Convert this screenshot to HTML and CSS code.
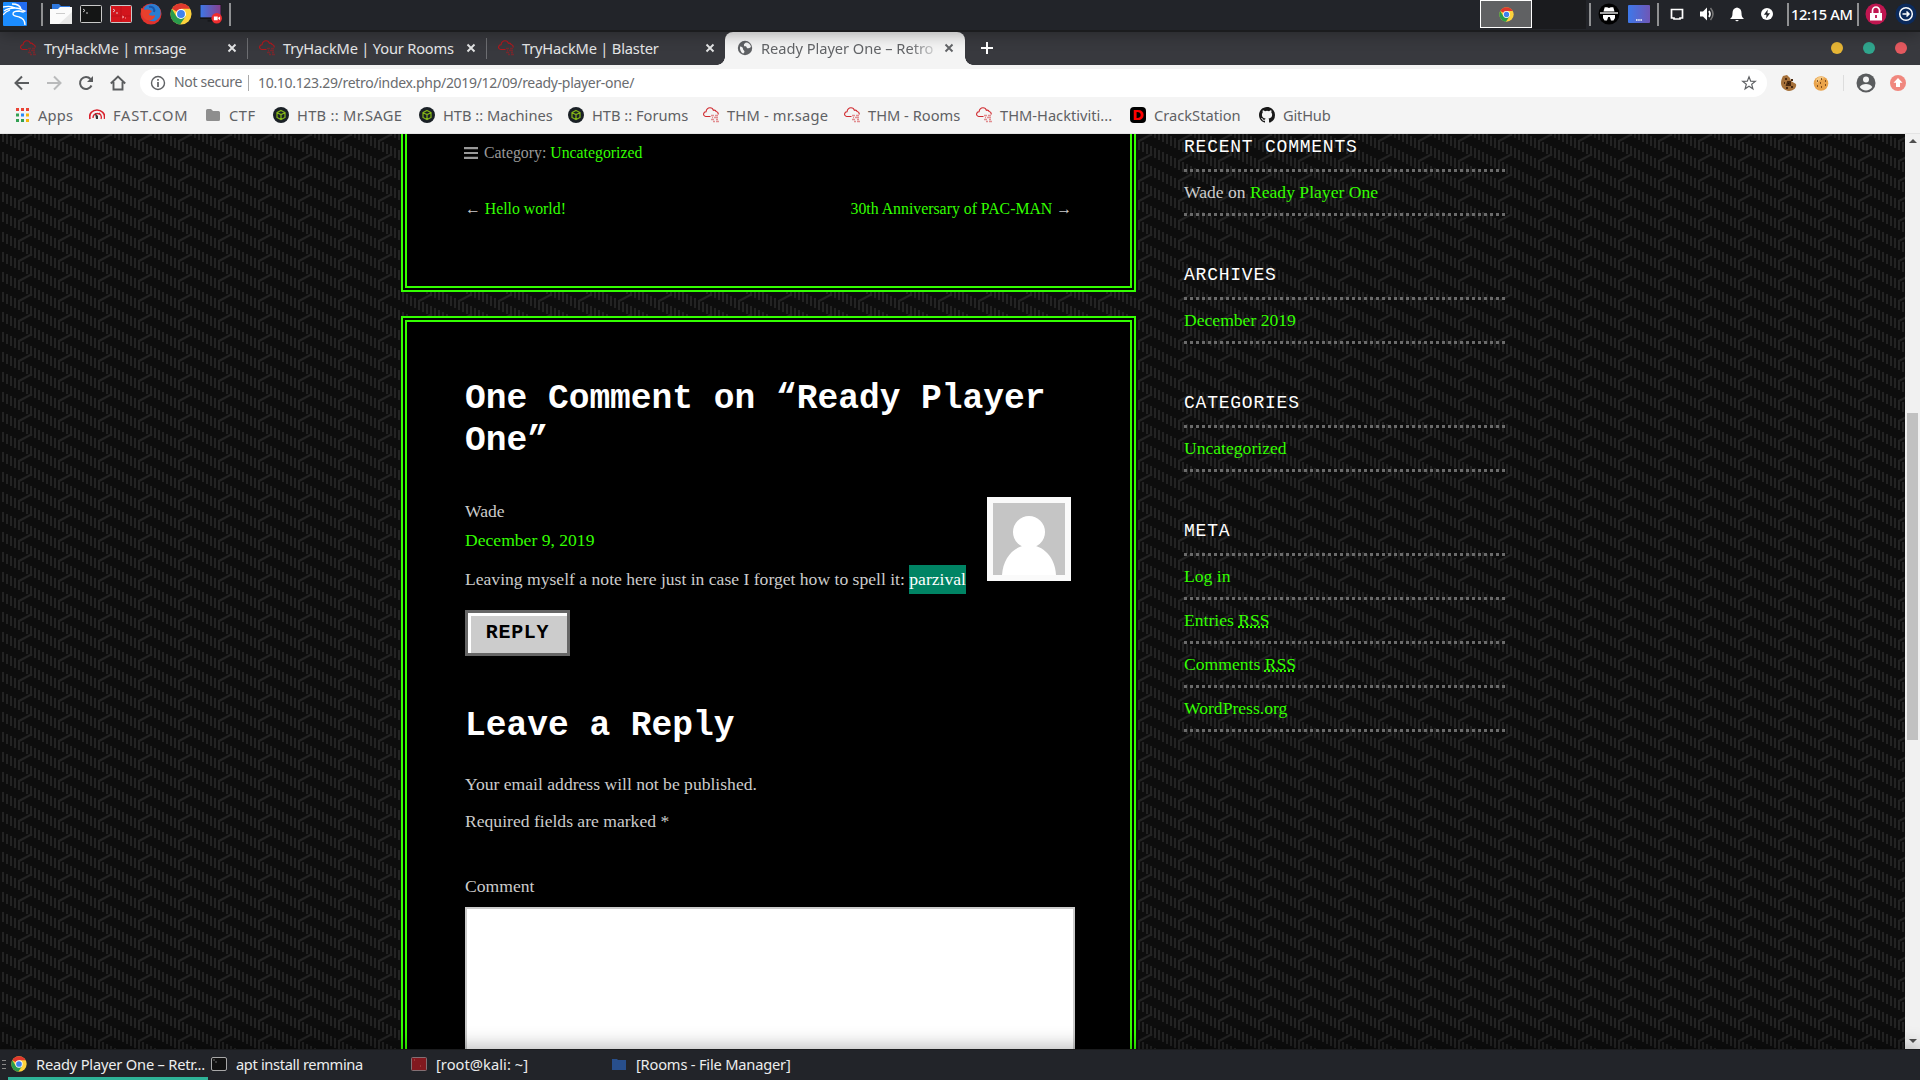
FILE: index.html
```html
<!DOCTYPE html>
<html lang="en">
<head>
<meta charset="utf-8">
<title>Ready Player One – Retro Fanatics</title>
<link rel="stylesheet" href="styles.css">
</head>
<body>
<svg class="defs" aria-hidden="true">
  <symbol id="chrome" viewBox="0 0 24 24">
    <circle cx="12" cy="12" r="11.5" fill="#fdd23c"/>
    <path d="M12 12 2 6.3A11.5 11.5 0 0 1 22 6.3H12z" fill="#e0382d"/>
    <path d="M2 6.3A11.5 11.5 0 0 0 11 23.5L17 14.7 12 12 7 14.7z" fill="#2a9b4c"/>
    <circle cx="12" cy="12" r="5.5" fill="#fff"/><circle cx="12" cy="12" r="4.3" fill="#3f82ee"/>
  </symbol>
  <symbol id="cloud" viewBox="0 0 16 16">
    <path d="M7.500 9.500H2.800C1.200 9.300.4 8 .6 6.800.8 5.600 1.800 4.800 3 4.800 3.400 2.300 4.800.7 7 .7c1.800 0 3 1 3.400 2.600 1.200-.4 2.300.1 2.700 1.200 1.400.2 2.300 1.400 2.100 3" fill="none" stroke="currentColor" stroke-width="1.100"/>
    <path d="M8 8.500h3m1 0h3M9 10.500h1m1 0h4M8 12.500h3m2 0h2M10 14.500h2m1 0h3" stroke="currentColor" stroke-width="1.300" opacity=".5"/>
  </symbol>
  <symbol id="htb" viewBox="0 0 16 16">
    <circle cx="8" cy="8" r="8" fill="#1a2026"/>
    <path d="M8 3.500 12 5.500v5L8 12.500 4 10.500v-5zM4 5.700 8 7.500l4-1.800M8 7.500v5" fill="none" stroke="#86b817" stroke-width="1.200"/>
  </symbol>
  <symbol id="close" viewBox="0 0 10 10"><path d="M1.500 1.500l7 7m0-7l-7 7" stroke="currentColor" stroke-width="1.900"/></symbol>
  <symbol id="term" viewBox="0 0 22 18">
    <rect x=".5" y=".5" width="21" height="17" rx="1" fill="currentColor" stroke="#c9c9c9"/>
    <path d="M3 4l2 1.500L3 7M6 8h2" stroke="#ddd" stroke-width=".9" fill="none"/>
  </symbol>
</svg>

<header class="panel panel-top">
  <svg class="kali" viewBox="0 0 24 24"><rect width="24" height="24" rx="1" fill="#1b8cff"/><path d="M12 0h12v12z" fill="#226cf0"/><path d="M0 5c5-1 9-1 12 1M1 9c4-3 8-3 11-3 3 0 6 1 7 2l3 1-2 1-4-1c-4 0-6 1-6 3s3 2 6 3c4 1 6 3 6 8M9 2c4 0 8 1 9 5M0 13c2-3 4-4 7-5" fill="none" stroke="#fff" stroke-width="1.300"/></svg>
  <i class="sep"></i>
  <div class="launchers">
    <svg viewBox="0 0 22 20"><path d="M2 0h7l2 2h9v6H2z" fill="#2f78de"/><path d="M0 5h8l2-2h12v17H0z" fill="#fbfbfb"/><path d="M22 8v12H9z" fill="#e8e8e8"/><path d="M6 9.500h9" stroke="#ccc"/></svg>
    <svg class="dark-term" viewBox="0 0 22 18"><use href="#term"/></svg>
    <svg class="red-term" viewBox="0 0 22 18"><use href="#term"/><path d="M11 1v16M1 11h20" stroke="#b51119" stroke-width=".7"/><path d="M12 11l2 1-2 1M15 13h1" stroke="#ffb0b0" fill="none" stroke-width=".8"/></svg>
    <svg viewBox="0 0 22 22"><circle cx="11" cy="11" r="10.500" fill="#e2332d"/><path d="M4 5C7 0 17-1 20 6c2 7-1 10-5 12-5 1-9-2-9-6z" fill="#2a7dd2"/><path d="M1 5l4 2c2-1 5 0 7 1-1 2-3 2-3 4 2 1 5 1 6 0 0 4-4 6-8 5-4-1-6-6-6-12z" fill="#e8402c"/><path d="M9 4c4-1 6 2 5 5" stroke="#1b56a8" stroke-width="2" fill="none"/></svg>
    <svg viewBox="0 0 24 24"><use href="#chrome"/></svg>
    <svg viewBox="0 0 23 22"><defs><linearGradient id="screen"><stop stop-color="#3d78e6"/><stop offset="1" stop-color="#8a3f8e"/></linearGradient></defs><rect y="1" width="22" height="15" fill="#111"/><rect x=".500" y="1.500" width="21" height="13" fill="url(#screen)"/><path d="M8 18h8" stroke="#17181b" stroke-width="2"/><circle cx="17.500" cy="15.500" r="5.500" fill="#ee2d2f"/><path d="M14.500 13.500h4v4h-4zM19 15l2-1.500v4L19 16z" fill="#fff"/></svg>
  </div>
  <i class="sep"></i>
  <div class="window-list"><span class="window-button"><svg viewBox="0 0 24 24"><use href="#chrome"/></svg></span><i class="window-rest"></i></div>
  <i class="sep"></i>
  <div class="tray">
    <svg viewBox="0 0 22 22"><circle cx="11" cy="11" r="10.500" fill="#000"/><path d="M5.500 8.500 6.700 4.200h2.500l1.800.7 1.800-.7h2.500l1.200 4.300z" fill="#fff"/><path d="M2 10h18" stroke="#fff" stroke-width="1.300"/><path d="M5 12h12v3l-1.500 2.500h-2.500L11.800 14h-1.600L9 17.500H6.500L5 15z" fill="#fff"/></svg>
    <svg viewBox="0 0 22 22"><defs><linearGradient id="desk"><stop stop-color="#3d78ea"/><stop offset="1" stop-color="#7057b6"/></linearGradient></defs><rect y="2" width="22" height="18" rx="1" fill="url(#desk)"/><path d="M8 17h6" stroke="#fff" stroke-width="1.500" stroke-dasharray="1.500 .7"/></svg>
  </div>
  <i class="sep"></i>
  <div class="status">
    <svg viewBox="0 0 16 16"><path d="M2.500 3.500h11v8.500h-2.500v1H5v-1H2.500z" fill="none" stroke="#fff" stroke-width="1.700"/></svg>
    <svg viewBox="0 0 16 16"><path d="M1 5.500h3L8 1.500v13L4 10.500H1z" fill="#fff"/><path d="M10 5q2 3 0 6" fill="none" stroke="#fff" stroke-width="1.700"/><path d="M11.500 2q5 6 0 12" fill="none" stroke="#777" stroke-width="1.500"/></svg>
    <svg viewBox="0 0 16 16"><path d="M1 13c2-2 2.500-3 2.500-6 0-3 1.500-5 4.500-5.500 3 .5 4.500 2.500 4.500 5.500 0 3 .5 4 2.500 6zM6 14h4l-2 1.500z" fill="#fff"/></svg>
    <svg viewBox="0 0 16 16"><circle cx="8" cy="8" r="6" fill="#fff"/><path d="M8.800 3.500 4.900 8.800h2.600l-.4 3.700 4-5.300H8.400z" fill="#222429"/></svg>
  </div>
  <i class="sep"></i>
  <time class="clock">12:15 AM</time>
  <i class="sep"></i>
  <div class="session">
    <svg viewBox="0 0 22 22"><circle cx="11" cy="11" r="10.500" fill="#bf1650"/><path d="M5 10h12v7.500H5z" fill="#fff"/><path d="M7.500 10V7.500a3.500 3.500 0 0 1 7 0V10" fill="none" stroke="#fff" stroke-width="1.700"/><path d="M11 12v3" stroke="#bf1650" stroke-width="1.800"/></svg>
    <svg viewBox="0 0 22 22"><circle cx="11" cy="11" r="10.500" fill="#0b2a5c"/><circle cx="11" cy="11" r="6.300" fill="none" stroke="#fff" stroke-width="1.500"/><path d="M7.500 11h6M11.500 8.500 14 11l-2.500 2.500" fill="none" stroke="#fff" stroke-width="1.500"/></svg>
  </div>
</header>

<nav class="tabstrip">
  <div class="tab"><svg class="fav"><use href="#cloud"/></svg><span>TryHackMe | mr.sage</span><svg class="x"><use href="#close"/></svg></div>
  <div class="tab"><svg class="fav"><use href="#cloud"/></svg><span>TryHackMe | Your Rooms</span><svg class="x"><use href="#close"/></svg></div>
  <div class="tab"><svg class="fav"><use href="#cloud"/></svg><span>TryHackMe | Blaster</span><svg class="x"><use href="#close"/></svg></div>
  <div class="tab active"><svg class="fav" viewBox="0 0 16 16"><circle cx="8" cy="8" r="7.200" fill="#5f6164"/><path d="M3 6.500c2 0 3 1 3 2.500s1.500 1 1.500 3c-1 1-1 1.500-1.500 1.500C4 12.500 2.500 9.500 3 6.500zM9 2.500c-1 1-2.500 1-2 3s2-.5 2.500 1.500 1.500 1 3 1l1.500-1C13.500 4 11.500 2.500 9 2.500z" fill="#f4f4f4"/></svg><span>Ready Player One – Retro</span><svg class="x"><use href="#close"/></svg></div>
  <svg class="new-tab" viewBox="0 0 12 12"><path d="M6 0v12M0 6h12" stroke="#fff" stroke-width="2"/></svg>
  <div class="lights"><i class="min"></i><i class="max"></i><i class="quit"></i></div>
</nav>

<div class="toolbar">
  <svg class="tool" viewBox="0 0 16 16"><path d="M15 8H2M8 1.500 1.500 8 8 14.500" fill="none" stroke="#5a5c5e" stroke-width="2"/></svg>
  <svg class="tool" viewBox="0 0 16 16"><path d="M1 8h13M8 1.500 14.500 8 8 14.500" fill="none" stroke="#b9babb" stroke-width="2"/></svg>
  <svg class="tool" viewBox="0 0 16 16"><path d="M13.500 10.500A6 6 0 1 1 12.500 4" fill="none" stroke="#5a5c5e" stroke-width="2"/><path d="M15 1v6H9z" fill="#5a5c5e"/></svg>
  <svg class="tool" viewBox="0 0 16 16"><path d="M.800 8.500 8 1.500l7.200 7M3.500 7v7.500h9V7" fill="none" stroke="#5a5c5e" stroke-width="1.900"/></svg>
  <div class="omnibox">
    <svg class="info" viewBox="0 0 16 16"><circle cx="8" cy="8" r="6.500" fill="none" stroke="#5f6164" stroke-width="1.400"/><path d="M8 4v1.800M8 7v5" stroke="#5f6164" stroke-width="1.700"/></svg>
    <span class="secure">Not secure</span><span class="url">10.10.123.29/retro/index.php/2019/12/09/ready-player-one/</span>
    <svg class="star" viewBox="0 0 16 16"><path d="M8 1.800 9.700 6.200l4.600.2-3.600 2.900 1.200 4.500L8 11.300l-3.900 2.500 1.200-4.500-3.600-2.900 4.600-.2z" fill="none" stroke="#5f6164" stroke-width="1.200"/></svg>
  </div>
  <div class="extensions">
    <svg viewBox="0 0 16 16"><path d="M2 1l4-1 3 3 1 3 5 3c1 3-2 7-7 7-5-.5-8-4-8-8C0 5 1 3 2 1z" fill="#a6713a"/><path d="M4 4h2M3 8h1M7 7h2v3H6zM10 12h2M5 13h2M10 5h2" stroke="#4a2a12" stroke-width="2"/></svg>
    <svg viewBox="0 0 16 16"><circle cx="8" cy="8.500" r="7.300" fill="#e9a34b"/><path d="M3 4q4-4 9-1-6 1-8 6z" fill="#f6ca86"/><path d="M4 6h1M8 4h1M12 6h1M7 8h1M4 11h1M8 12h1M12 10h1" stroke="#5f3310" stroke-width="1.300"/></svg>
    <i></i>
    <svg class="avatar-icon" viewBox="0 0 20 20"><circle cx="10" cy="10" r="9.500" fill="#5a5c5e"/><circle cx="10" cy="6.500" r="3" fill="#f4f4f4"/><path d="M3.700 14c2-4 10.600-4 12.600 0-3 4.500-9.600 4.500-12.600 0z" fill="#f4f4f4"/></svg>
    <svg viewBox="0 0 16 16"><circle cx="8" cy="8" r="8" fill="#f0877e"/><path d="M8 3l4.500 4.800H10V12H6V7.800H3.500z" fill="#fff"/></svg>
  </div>
</div>

<div class="bookmarks">
  <span class="bm apps"><svg viewBox="0 0 16 16"><path d="M2 2.500h3M7 2.500h3M12 2.500h3" stroke="#ea4335" stroke-width="3"/><path d="M2 8h3M2 13.500h3M7 13.500h3" stroke="#34a153" stroke-width="3"/><path d="M7 8h3" stroke="#2a8cf4" stroke-width="3"/><path d="M12 8h3M12 13.500h3" stroke="#f5b70b" stroke-width="3"/></svg>Apps</span>
  <span class="bm fast"><svg viewBox="0 0 16 16"><path d="M1 12C-.5 6 4 3 8 3s8.500 3 7.500 9" fill="none" stroke="#d9202c" stroke-width="1.700"/><path d="M4 11c0-4 4-6 8-3M12 12c1-2 0-4-2-6" fill="none" stroke="#d9202c" stroke-width="1.300"/><path d="M6 6l3 3v3H7z" fill="#333"/></svg>FAST.COM</span>
  <span class="bm ctf"><svg viewBox="0 0 16 16"><path d="M1 3.500q0-1.500 1.500-1.500H6l2 2h5.500Q15 4 15 5.500v7q0 1.500-1.500 1.500h-11Q1 14 1 12.500z" fill="#8e8e8e"/></svg>CTF</span>
  <span class="bm b1"><svg><use href="#htb"/></svg>HTB :: Mr.SAGE</span>
  <span class="bm b2"><svg><use href="#htb"/></svg>HTB :: Machines</span>
  <span class="bm b3"><svg><use href="#htb"/></svg>HTB :: Forums</span>
  <span class="bm b4"><svg><use href="#cloud"/></svg>THM - mr.sage</span>
  <span class="bm b5"><svg><use href="#cloud"/></svg>THM - Rooms</span>
  <span class="bm b6"><svg><use href="#cloud"/></svg>THM-Hacktiviti...</span>
  <span class="bm b7"><b class="crack">D</b>CrackStation</span>
  <span class="bm b8"><svg viewBox="0 0 16 16"><path fill="#181818" fill-rule="evenodd" d="M8 0C3.580 0 0 3.580 0 8c0 3.540 2.290 6.530 5.470 7.590.4.070.55-.17.55-.38v-1.490c-2.010.37-2.530-.49-2.690-.94-.09-.23-.48-.94-.82-1.130-.28-.15-.68-.52-.01-.53.63-.01 1.080.58 1.230.82.72 1.210 1.870.87 2.330.66.07-.52.28-.87.51-1.070-1.780-.2-3.640-.89-3.640-3.950 0-.87.31-1.590.82-2.150-.08-.2-.36-1.020.08-2.120 0 0 .67-.21 2.200.82a7.600 7.600 0 0 1 4 0c1.530-1.040 2.200-.82 2.200-.82.44 1.100.16 1.920.08 2.120.51.56.82 1.270.82 2.150 0 3.070-1.870 3.750-3.650 3.950.29.25.54.73.54 1.480v2.200c0 .21.15.46.55.38A8 8 0 0 0 16 8c0-4.420-3.580-8-8-8z"/></svg>GitHub</span>
</div>

<div class="viewport">
  <div class="site">
    <main>
      <article class="card post">
        <p class="category"><svg viewBox="0 0 14 12"><path d="M0 1.200h14M0 6h14M0 10.800h14" stroke="#999" stroke-width="2.200"/></svg>Category: <a>Uncategorized</a></p>
        <nav class="post-nav"><span>← <a>Hello world!</a></span><span><a>30th Anniversary of PAC-MAN</a> →</span></nav>
      </article>
      <section class="card comments">
        <h2>One Comment on “Ready Player One”</h2>
        <div class="comment">
          <div class="comment-text">
            <div>Wade</div>
            <div><a>December 9, 2019</a></div>
            <p>Leaving myself a note here just in case I forget how to spell it: <mark>parzival</mark></p>
          </div>
          <svg class="avatar" viewBox="0 0 72 72"><rect width="72" height="72" fill="#c5c5c5"/><circle cx="36" cy="29" r="16" fill="#fff"/><path d="M9 72C10 54 22 42 36 42s26 12 27 30z" fill="#fff"/></svg>
        </div>
        <a class="reply">REPLY</a>
        <h2 class="leave">Leave a Reply</h2>
        <p class="note">Your email address will not be published.</p>
        <p class="note">Required fields are marked *</p>
        <label>Comment</label>
        <div class="textarea"></div>
      </section>
    </main>
    <aside>
      <h3>Recent Comments</h3>
      <ul><li>Wade on <a>Ready Player One</a></li></ul>
      <h3>Archives</h3>
      <ul><li><a>December 2019</a></li></ul>
      <h3>Categories</h3>
      <ul><li><a>Uncategorized</a></li></ul>
      <h3>Meta</h3>
      <ul><li><a>Log in</a></li><li><a>Entries <abbr>RSS</abbr></a></li><li><a>Comments <abbr>RSS</abbr></a></li><li><a>WordPress.org</a></li></ul>
    </aside>
  </div>
  <div class="scrollbar"><i class="arrow up"></i><i class="thumb"></i><i class="arrow down"></i></div>
</div>

<footer class="panel panel-bottom">
  <i class="grip"></i>
  <div class="task current"><svg viewBox="0 0 24 24"><use href="#chrome"/></svg><span>Ready Player One – Retr...</span></div>
  <div class="task"><svg viewBox="0 0 16 14"><rect x=".500" y=".500" width="15" height="13" rx="1.500" fill="#111" stroke="#a8a8a8"/><path d="M2.500 3h1M4.500 5h1" stroke="#ccc"/></svg><span class="narrow">apt install remmina</span></div>
  <div class="task"><svg viewBox="0 0 16 14"><rect x=".500" y=".500" width="15" height="13" rx="1" fill="#82191f" stroke="#837074"/><path d="M3 3h1M9 9h1" stroke="#b55"/></svg><span class="wide">[root@kali: ~]</span></div>
  <div class="task"><svg viewBox="0 0 16 14"><path d="M1 2h5l1 1h8v10H1z" fill="#284f8c"/></svg><span>[Rooms - File Manager]</span></div>
</footer>
</body>
</html>
```
FILE: styles.css
```css
* { box-sizing: border-box; }
body { margin: 0; width: 1920px; height: 1080px; overflow: hidden; display: flex; flex-direction: column; font-family: "Noto Sans", sans-serif; font-size: 14.67px; color: #5f6164; background: #0d0d0d; }
p, h2, h3, ul { margin: 0; padding: 0; }
svg, i { display: block; flex: none; }
.defs { position: absolute; width: 0; height: 0; }

.panel { flex: none; display: flex; align-items: center; background: #222429; color: #fff; position: relative; z-index: 2; }
.panel-top { height: 32px; padding: 0 3px 2px; border-bottom: 2px solid #1b1c1e; box-shadow: 0 2px 16px rgba(0,0,0,.32); }
.sep { width: 2px; height: 23px; background: #8f9092; }
.kali { width: 24px; height: 24px; margin-right: 14px; }
.launchers { display: flex; align-items: center; gap: 8px; margin: 0 6px 0 7px; width: 173px; }
.launchers svg { width: 22px; height: 22px; }
.dark-term { color: #141515; }
.red-term { color: #d3151c; }
.window-list { width: 1359px; display: flex; justify-content: flex-end; align-items: center; padding-right: 3px; height: 28px; }
.window-button { width: 52px; height: 28px; border: 1px solid #fff; background: #606163; display: flex; align-items: center; justify-content: center; }
.window-button svg { width: 15px; height: 15px; }
.window-rest { width: 54px; height: 30px; background: #1a1b1e; }
.tray { display: flex; gap: 8px; margin: 0 7px; }
.tray svg { width: 22px; height: 22px; }
.status { display: flex; gap: 14px; margin: 0 12px 0 10px; }
.status svg { width: 16px; height: 16px; }
.clock { width: 68px; padding-left: 2px; font-weight: 500; white-space: nowrap; letter-spacing: -.35px; }
.session { display: flex; gap: 8px; margin-left: 6px; }
.session svg { width: 22px; height: 22px; }

.tabstrip { flex: none; height: 33px; display: flex; align-items: center; background: #38393e; color: #e4e5e6; }
.tab { width: 239px; height: 33px; display: flex; align-items: center; padding: 0 2px 0 20px; position: relative; }
.tab + .tab:not(.active)::before { content: ""; width: 1px; height: 21px; background: #6d6e72; margin: 0 11px 0 -12px; }
.tab span { flex: 1; white-space: nowrap; margin-left: 8px; margin-right: 6px; letter-spacing: -.19px; padding-bottom: 2px; }
.fav { width: 16px; height: 16px; color: #b3171d; }
.x { width: 10px; height: 10px; }
.tab.active { width: 240px; margin-left: 8px; padding: 0 11px 0 12px; background: #f4f4f4; color: #626467; border-radius: 8px 8px 0 0; }
.tab.active span { letter-spacing: -.04px; -webkit-mask-image: linear-gradient(to right, #000 84%, transparent 102%); }
.tab.active::before, .tab.active::after { content: ""; position: absolute; bottom: 0; width: 8px; height: 8px; }
.tab.active::before { left: -8px; background: radial-gradient(circle at 0 0, transparent 7.5px, #f4f4f4 8px); }
.tab.active::after { right: -8px; background: radial-gradient(circle at 100% 0, transparent 7.5px, #f4f4f4 8px); }
.new-tab { width: 12px; height: 12px; margin-left: 16px; }
.tab svg, .new-tab, .lights { margin-bottom: 1px; }
.lights { margin-left: auto; margin-right: 13px; display: flex; gap: 20px; }
.lights i { width: 12px; height: 12px; border-radius: 50%; }
.min { background: #e6b535; }
.max { background: #30a58d; }
.quit { background: #e4595f; }

.toolbar { flex: none; height: 36px; display: flex; align-items: center; background: #f4f4f4; padding-left: 14px; }
.tool { width: 16px; height: 16px; margin-right: 16px; }
.omnibox { width: 1627px; height: 28px; background: #fff; border-radius: 14px; margin-left: -2px; display: flex; align-items: center; padding: 0 10px; font-size: 14px; letter-spacing: -.31px; color: #6a6c6f; }
.info { width: 16px; height: 16px; margin-right: 8px; }
.secure { border-right: 1px solid #aaa; line-height: 14px; padding-bottom: 2px; width: 75px; white-space: nowrap; }
.url { margin-left: 9px; flex: 1; white-space: nowrap; padding-bottom: 1px; }
.star { width: 16px; height: 16px; }
.extensions { display: flex; align-items: center; margin-left: 14px; }
.extensions svg { width: 16px; height: 16px; }
.extensions svg + svg { margin-left: 16px; }
.extensions i { width: 1px; height: 16px; background: #ddd; margin: 0 13px 0 14px; }
.extensions .avatar-icon { width: 20px; height: 20px; margin-left: -1px; }
.extensions .avatar-icon + svg { margin-left: 14px; }

.bookmarks { flex: none; height: 33px; background: #f4f4f4; border-bottom: 1px solid #e4e4e4; display: flex; align-items: center; padding: 0 0 5px 13px; }
.bm { display: flex; align-items: center; gap: 8px; white-space: nowrap; line-height: 20px; }
.bm svg, .crack { width: 16px; height: 16px; color: #d0292e; }
.apps { width: 76px; padding-left: 1px; letter-spacing: .2px; }
.fast { width: 116px; letter-spacing: .8px; }
.ctf { width: 68px; letter-spacing: .5px; }
.b1 { width: 146px; letter-spacing: .3px; }
.b2 { width: 149px; }
.b3 { width: 135px; }
.b4 { width: 141px; letter-spacing: .2px; }
.b5 { width: 132px; }
.b6 { width: 154px; }
.b7 { width: 129px; }
.b8 { letter-spacing: -.2px; }
.crack { background: #000; color: #f00; border-radius: 4px; font-family: "DejaVu Sans", sans-serif; font-size: 14px; line-height: 16px; text-align: center; }

.viewport { flex: none; height: 915px; display: flex; overflow: hidden; }
.site { width: 1905px; flex: none; display: flex; padding-left: 401px; font-family: "Liberation Serif", serif; font-size: 17.6px; line-height: 29px; color: #ccc; background: #0d0d0d url("data:image/svg+xml,%3Csvg xmlns='http://www.w3.org/2000/svg' width='40' height='20'%3E%3Cpath d='M3-2V8M3 18V28M7 0V10M11 2V12M15 4V14M19 6V16M23 8V18M27 10V20M31 12V22M31-8V2M35 14V24M35-6V4M39 16V26M39-4V6M19 7L32 0M19 27L32 20' stroke='%23232323' stroke-width='2' fill='none'/%3E%3C/svg%3E"); }
a { color: #3f0; }
.card { width: 735px; border: 6px double #3f0; background: #000; padding: 0 58px; }
.post { height: 158px; border-top: 0; margin-bottom: 24px; font-size: 15.8px; }
.category { color: #999; display: flex; align-items: center; white-space: pre; padding-top: 4px; margin-left: -1px; }
.category svg { width: 14px; height: 12px; margin-right: 6px; }
.post-nav { display: flex; justify-content: space-between; margin-top: 27px; }
.comments { height: 900px; padding-top: 56px; }
h2 { font: bold 34.56px/42px "Liberation Mono", monospace; color: #fff; }
.comment { display: flex; justify-content: space-between; margin-top: 35px; width: 606px; height: 97px; }
.comment-text { white-space: nowrap; }
.comment p { margin-top: 10px; }
mark { background: #008464; color: #fff; display: inline-block; }
.avatar { width: 84px; height: 84px; border: 6px solid #fafafa; }
.reply { display: block; width: 105px; height: 46px; margin-top: 16px; border: 3px solid #666; background: #ccc; box-shadow: inset 3px 3px 0 #fff; color: #000; font: bold 20px/39px "Liberation Mono", monospace; letter-spacing: .7px; text-align: center; }
.leave { margin: 49px 0 23px; }
.note { margin-bottom: 8px; }
label { display: block; margin-top: 36px; }
.textarea { width: 610px; height: 300px; margin-top: 6px; background: #fff; border: 2px solid #ccc; }
aside { width: 321px; margin-left: 48px; margin-top: -46px; }
h3 { height: 84px; padding-top: 39px; font: 18px/40px "Liberation Mono", monospace; padding-top: 39px; letter-spacing: .77px; color: #fff; text-transform: uppercase; background: repeating-linear-gradient(to right, #6b6b6b 0 3px, transparent 3px 6px) bottom/100% 3px no-repeat; }
aside ul { list-style: none; }
aside li { height: 44px; padding-top: 6px; background: repeating-linear-gradient(to right, #6b6b6b 0 3px, transparent 3px 6px) bottom/100% 3px no-repeat; }
abbr { text-decoration: underline dotted; }

.scrollbar { width: 15px; background: #f1f1f1; display: flex; flex-direction: column; align-items: center; }
.arrow { border: 4px solid transparent; width: 0; height: 0; }
.up { border-bottom-color: #505050; margin-top: 1px; }
.down { border-top-color: #505050; margin: auto 0 2px; }
.thumb { width: 11px; height: 327px; margin-top: 270px; background: #c1c1c1; }

.panel-bottom { height: 31px; box-shadow: 0 -2px 20px rgba(0,0,0,.3); color: #eceded; border-top: 1px solid #1b1c1e; }
.grip { width: 4px; height: 10px; margin: 0 2px; background: repeating-linear-gradient(#888 0 1px, transparent 1px 4px); }
.task { width: 200px; height: 30px; display: flex; align-items: center; padding-left: 3px; border-bottom: 3px solid transparent; white-space: nowrap; letter-spacing: -.2px; }
.task .narrow { letter-spacing: -.35px; }
.task .wide { letter-spacing: .05px; }
.task.current { border-bottom-color: #2eb398; }
.task svg { width: 16px; height: 16px; margin-right: 9px; }
```
